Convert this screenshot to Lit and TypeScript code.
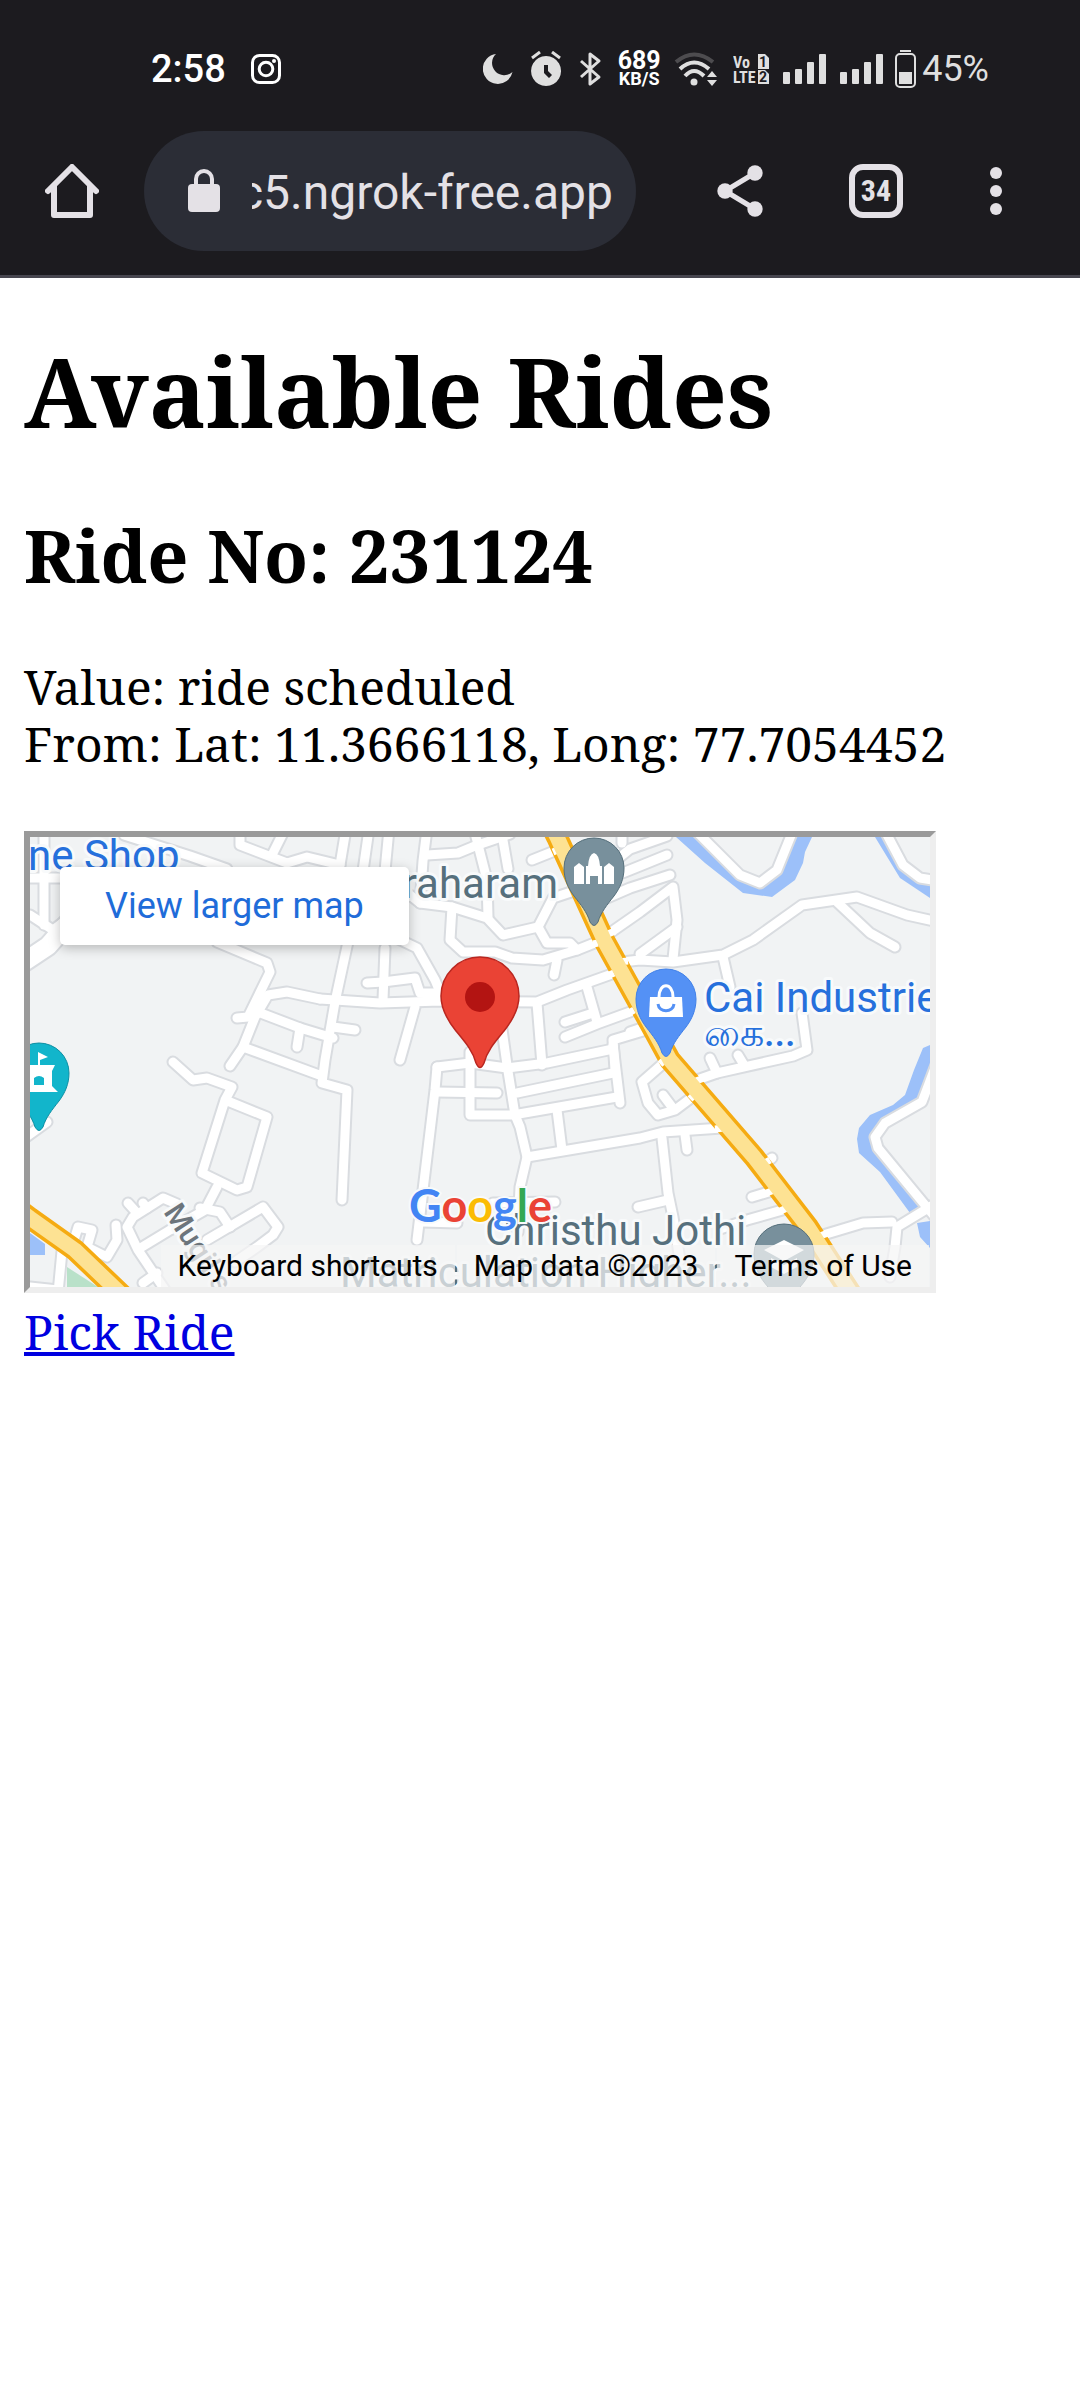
import { LitElement, html, svg, css } from "lit";
import { customElement } from "lit/decorators.js";

/* Minor streets of the map, as point lists in a 900 x 450 frame. */
const STREETS: string[] = [
  "14,-8 14,88", "0,41 40,41", "0,78 23,93 40,80", "94,-2 160,19 197,32", "210,-8 210,8 257,26 277,20 310,28",
  "254,-6 242,18", "187,105 237,126 240,135 218,180 207,181",
  "290,162 257,155 238,158 225,180 213,210 200,229", "228,175 270,191 303,201", "270,191 267,210",
  "213,210 292,239", "143,225 163,243 177,241 202,250 195,263 172,336 207,353 217,350 237,280 195,263",
  "316,-8 309,34", "339,-8 333,34", "359,-8 355,34", "397,-8 393,24 390,66", "397,18 428,16 445,9 480,-3",
  "444,-8 457,43 458,80", "471,-8 478,32", "380,58 390,66 422,70 457,81 473,98 508,90 523,61 550,52",
  "422,70 420,103 433,115 465,115 482,121 513,123 547,113 572,103", "508,90 517,106 540,106 547,113",
  "527,123 524,138", "502,23 532,11", "360,98 387,111 405,143 410,155",
  "319,100 305,165 295,223 292,246 317,253 312,363", "355,111 353,163", "337,146 353,145 385,141 390,156 412,156",
  "290,162 350,166 410,164 507,165 537,153 582,137", "385,170 370,223", "303,190 325,193",
  "507,166 512,228", "557,150 567,185", "535,185 563,176", "535,200 567,187 600,175",
  "613,194 583,203 585,233", "407,230 440,226 477,231 517,226 583,212", "440,215 440,278 483,278 587,260",
  "471,185 477,228 485,278 490,290 497,320 490,350 488,395", "407,255 467,256", "407,230 405,253 387,403",
  "487,256 583,236", "583,208 590,266", "527,273 532,313", "497,320 610,301 633,295 692,291",
  "393,385 427,386", "463,366 525,365", "592,-6 592,6", "565,40 600,12 637,-1", "567,46 600,33 637,18",
  "570,64 600,51 640,38", "577,98 610,75 643,50 647,83 643,122", "647,90 610,117",
  "592,125 610,123 643,125 693,118 723,103 772,68 827,60 877,78 908,85", "807,65 840,96 865,110",
  "693,120 700,150", "772,176 777,213 763,219 687,236 667,243", "680,221 687,236", "708,218 714,228",
  "668,-4 710,38 730,46 747,33 762,-4", "855,-6 873,28 890,41 908,44",
  "906,228 892,265 855,286 845,300 848,311 905,380", "908,365 867,390 865,410 860,440",
  "793,398 833,386 862,385", "735,326 742,321", "722,360 742,354", "690,392 717,383 756,372",
  "636,224 612,245 618,266 628,278 645,273 665,258", "633,258 642,270", "632,301 638,356 643,380 650,423",
  "608,370 638,363", "655,298 657,313", "600,195 615,190", "32,414 28,456", "0,450 28,453",
  "45,400 48,390 62,393 57,410 77,420 87,403 86,388", "137,456 108,413 97,390 103,380 133,361 147,367",
  "98,366 107,376", "113,366 117,371", "112,410 140,393 175,373 187,350", "170,371 190,375 200,390",
  "177,403 233,370 248,390 243,398 227,410 205,425", "113,446 127,436", "-4,300 17,285",
];

const HIGHWAYS = [
  "522,-10 527,0 575,105 622,190 640,223 724,320 778,390 822,458",
  "-12,372 0,381 45,413 92,458",
];

/* Streets that cut through the edge of a highway. */
const CROSSINGS = [
  "530,12 523,15", "568,106 563,107", "578,97 585,94", "588,125 598,124", "577,139 584,136",
  "597,177 604,173", "614,190 620,187", "630,227 638,220", "660,262 664,258", "666,244 674,241",
  "685,292 694,291", "733,327 740,323", "734,357 744,353", "748,375 757,371", "790,399 798,396",
];

const PIN =
  "M0 30a30 30 0 0 1 60 0c0 11-4 20-10 28C43 67 37 74 34 84q-4 7-8 0C23 74 17 67 10 58 4 50 0 41 0 30z";

@customElement("status-bar")
export class StatusBar extends LitElement {
  static styles = css`
    :host {
      display: flex;
      align-items: center;
      justify-content: space-between;
      height: 76px;
      padding: 31px 91px 24px 151px;
      color: #dfdfdf;
      font-family: Roboto, "Liberation Sans", sans-serif;
    }
    .group { display: flex; align-items: center; gap: 12px; }
    .left { gap: 25px; color: #fff; }
    .power { gap: 6px; }
    .time { font-size: 38px; line-height: 40px; font-weight: 500; }
    .level { font-size: 36px; line-height: 40px; }
    .speed {
      display: flex; flex-direction: column; align-items: center;
      width: 44px; color: #fff; font-weight: 700;
    }
    .rate { font-size: 25px; line-height: 20px; }
    .unit { font-size: 18px; line-height: 16px; }
    .narrow { font: 700 16px "Roboto Condensed", Roboto, sans-serif; }
    .chip { font: 700 14px Roboto, sans-serif; fill: #1c1b1f; }
    svg { display: block; fill: currentColor; }
  `;

  private signal(width: number) {
    return html`<svg width=${width} height="36" aria-hidden="true">
      <rect x="0" y="21" width="7" height="12" rx="1" /><rect x="12" y="18" width="7" height="15" rx="1" />
      <rect x="24" y="11" width="7" height="22" rx="1" /><rect x="36" y="3" width="7" height="30" rx="1" />
    </svg>`;
  }

  render() {
    return html`
      <div class="group left">
        <span class="time">2:58</span>
        <svg width="30" height="30" viewBox="0 0 30 30" aria-hidden="true">
          <rect x="1.500" y="1.500" width="27" height="27" rx="7" fill="none" stroke="currentColor" stroke-width="3" />
          <circle cx="15" cy="15" r="6.800" fill="none" stroke="currentColor" stroke-width="3" />
          <circle cx="23" cy="7" r="2" />
        </svg>
      </div>
      <div class="group">
        <svg width="36" height="36" aria-hidden="true">
          <path d="M13 3A15 15 0 1 0 29.500 21 12 12 0 0 1 13 3z" />
        </svg>
        <svg width="37" height="36" aria-hidden="true">
          <path fill-rule="evenodd" d="M15 5a15 15 0 1 0 .1 0zM13 14h4v6l4 4-3 3-5-5z" />
          <path d="M1 7l8-6M29 7l-8-6" stroke="currentColor" stroke-width="3" />
        </svg>
        <svg width="25" height="36" aria-hidden="true">
          <path d="M1 10l18 16-9 7V3l9 7L1 26" fill="none" stroke="currentColor" stroke-width="3" stroke-linejoin="round" />
        </svg>
        <div class="speed"><span class="rate">689</span><span class="unit">KB/S</span></div>
        <svg width="48" height="36" aria-hidden="true">
          <g fill="none" stroke="currentColor" stroke-width="4">
            <path d="M3 11q18-15 37 0" opacity=".25" />
            <path d="M7 18q14-13 29 0" /><path d="M12 25q9-10 19 0" />
          </g>
          <circle cx="21" cy="31" r="3.500" />
          <path d="M34 26l5-6 5 6zM34 29h10l-5 6z" />
        </svg>
        <svg width="38" height="36" aria-hidden="true">
          <text class="narrow" x="0" y="17">Vo</text>
          <text class="narrow" x="0" y="32">LTE</text>
          <path d="M25 3h7l4 4v11H25z" /><path d="M25 19h7l4 4v10H25z" />
          <text class="chip" x="26" y="16">1</text><text class="chip" x="26" y="31">2</text>
        </svg>
        ${this.signal(45)} ${this.signal(43)}
        <div class="group power">
          <svg width="21" height="40" aria-hidden="true">
            <rect x="5" y="1" width="11" height="2" />
            <rect x="1" y="5" width="19" height="33" rx="4" fill="none" stroke="currentColor" stroke-width="2" />
            <rect x="4" y="23" width="13" height="12" />
          </svg>
          <span class="level">45%</span>
        </div>
      </div>
    `;
  }
}

@customElement("browser-toolbar")
export class BrowserToolbar extends LitElement {
  static styles = css`
    :host {
      display: flex;
      align-items: center;
      padding: 0 32px 24px 0;
      border-bottom: 3px solid #47464f;
      color: #e4e1e6;
      font-family: Roboto, "Liberation Sans", sans-serif;
    }
    button {
      display: flex; align-items: center; justify-content: center;
      width: 136px; height: 120px; padding: 0; border: 0;
      background: none; color: inherit; font: inherit;
    }
    .home { width: 144px; }
    .share { margin-left: 36px; }
    .menu { width: 104px; }
    .address {
      display: flex; align-items: center; gap: 32px; flex: 1; min-width: 0;
      height: 120px; box-sizing: border-box; padding: 0 23px 0 44px;
      border-radius: 60px; background: #2b2d36;
    }
    .url {
      flex: 1; min-width: 0; height: 62px; padding: 2px 0 0; box-sizing: border-box;
      border: 0; outline: 0; background: none; color: inherit;
      font: 48px/60px Roboto, "Liberation Sans", sans-serif;
      direction: rtl;
    }
    .tabs span {
      display: flex; align-items: center; justify-content: center;
      width: 54px; height: 54px; box-sizing: border-box;
      border: 6px solid currentColor; border-radius: 14px;
      font-size: 30px; line-height: 32px; font-weight: 700;
      font-family: "Roboto Condensed", Roboto, "Liberation Sans", sans-serif;
    }
    svg { display: block; flex: none; }
  `;

  render() {
    return html`
      <button class="home" aria-label="Home">
        <svg width="54" height="54" viewBox="0 0 54 54" fill="none" stroke="currentColor" stroke-width="6" stroke-linejoin="round" stroke-linecap="round">
          <path d="M3 27L27 3l24 24M9 22v29h36V22" />
        </svg>
      </button>
      <div class="address">
        <svg width="32" height="44" viewBox="0 0 32 44" aria-hidden="true">
          <rect y="15" width="32" height="28" rx="4" fill="currentColor" />
          <path d="M8 17v-7a8 8 0 0 1 16 0v7" fill="none" stroke="currentColor" stroke-width="4" />
        </svg>
        <input class="url" type="text" aria-label="Address" value="c5.ngrok-free.app" />
      </div>
      <button class="share" aria-label="Share">
        <svg width="46" height="52" viewBox="0 0 46 52" fill="currentColor">
          <path d="M38 8L8 26 38 44" fill="none" stroke="currentColor" stroke-width="5" />
          <circle cx="38" cy="8" r="7.700" /><circle cx="8" cy="26" r="7.700" /><circle cx="38" cy="44" r="7.700" />
        </svg>
      </button>
      <button class="tabs" aria-label="34 open tabs"><span>34</span></button>
      <button class="menu" aria-label="Menu">
        <svg width="12" height="48" viewBox="0 0 12 48" fill="currentColor">
          <circle cx="6" cy="6" r="6" /><circle cx="6" cy="24" r="6" /><circle cx="6" cy="42" r="6" />
        </svg>
      </button>
    `;
  }
}

@customElement("ride-map")
export class RideMap extends LitElement {
  static styles = css`
    :host {
      display: block;
      position: relative;
      box-sizing: border-box;
      width: 912px;
      max-width: 100%;
      overflow: hidden;
      border: 6px solid;
      border-color: #9a9a9a #eee #eee #9a9a9a;
      background: #f1f3f4;
      font-family: Roboto, "Liberation Sans", sans-serif;
    }
    .canvas { display: block; width: 100%; height: auto; }
    .line { fill: none; stroke-linejoin: round; stroke-linecap: round; }
    .casing { stroke: #d9dce0; stroke-width: 13px; }
    .street { stroke: #fff; stroke-width: 9px; }
    .edge { stroke: #f5ab12; stroke-width: 22px; }
    .highway { stroke: #fde293; stroke-width: 15px; }
    .crossing { stroke: #fff; stroke-width: 7px; stroke-linecap: butt; }
    .water { fill: #9cc0f9; }
    .label {
      font-size: 42px; stroke: #f8fafb; stroke-width: 6px;
      stroke-linejoin: round; paint-order: stroke;
    }
    .blue { fill: #2670dc; }
    .slate { fill: #56707d; }
    .grey { fill: #6d757c; }
    .sub { font-size: 38px; font-weight: 500; }
    .road { font-size: 30px; font-weight: 500; }
    .brand { font: 700 45px Lato, Roboto, sans-serif; stroke: #f8fafb; stroke-width: 4px; paint-order: stroke; }
    .larger {
      position: absolute; top: 30px; left: 30px;
      padding: 18px 45px; border-radius: 5px; background: #fff; color: #1f6cd9;
      font-size: 36px; line-height: 42px; text-decoration: none; white-space: nowrap;
      box-shadow: 0 3px 12px rgba(0, 0, 0, 0.25);
    }
    .credits {
      position: absolute; right: 0; bottom: 0;
      display: flex; gap: 2px; padding-right: 1px; font-size: 30px; line-height: 42px; white-space: nowrap;
    }
    .credits > * {
      padding: 0 17px; border: 0; background: rgba(245, 245, 245, 0.72);
      color: #000; font: inherit; text-decoration: none;
    }
  `;

  render() {
    const lines = (list: string[], kind: string) =>
      list.map((points) => svg`<polyline class="line ${kind}" points=${points} />`);
    return html`
      <svg class="canvas" viewBox="0 0 900 450" role="img" aria-label="Map of the pick-up point">
        <path class="water" d="M646 0L675 26 713 56 742 60 765 43 773 26 775 15 782 0H760L745 33 730 46 710 38 668 0zM845 0L870 41 900 61V40L873 28 857 0z" />
        <path class="water" d="M900 208L893 211 884 233 875 258 863 268 840 278 829 291 827 302 829 316 850 335 880 376 895 372 848 311 845 300 855 286 892 265 900 245zM887 386L890 400 900 411V384z" />
        <path class="water" d="M0 396L15 407V418H0z" />
        <path d="M37 430L68 450H37z" fill="#b9e1c9" />
        ${lines(STREETS, "casing")}
        <polyline class="line" points="-6,125 18,109 40,84" stroke="#d9dce0" stroke-width="22" />
        ${lines(STREETS, "street")}
        <polyline class="line" points="-6,125 18,109 40,84" stroke="#fff" stroke-width="18" />
        ${lines(HIGHWAYS, "edge")} ${lines(CROSSINGS, "crossing")} ${lines(HIGHWAYS, "highway")}

        <text class="label blue" x="-2" y="33">ne Shop</text>
        <text class="label slate" x="528" y="61" text-anchor="end">raharam</text>
        <text class="label blue" x="674" y="175">Cai Industries</text>
        <text class="label sub blue" x="674" y="209">கை...</text>
        <text class="label slate" x="455" y="408">Christhu Jothi</text>
        <text class="label slate" x="310" y="450">Matriculation Higher...</text>
        <text class="label road grey" transform="translate(133 375) rotate(57)">Mugil s</text>

        <g transform="translate(534 1)">
          <path d=${PIN} fill="#78909c" stroke="#546e7a" />
          <path fill="#fff" d="M10 46V29l5-4 5 4v17zM40 46V29l5-4 5 4v17zM22 46V28h2q1-12 6-13 5 1 6 13h2v18h-4v-8h-8v8z" />
        </g>
        <g transform="translate(606 132)">
          <path d=${PIN} fill="#5491f5" stroke="#4080e8" />
          <path d="M14 28h32l1 20H13z" fill="#fff" />
          <path d="M23 28c0-15 14-15 14 0" fill="none" stroke="#fff" stroke-width="3" />
          <path d="M22 35c1 9 15 9 16 0" fill="none" stroke="#5491f5" stroke-width="3" />
        </g>
        <g transform="translate(-21 206)">
          <path d=${PIN} fill="#12b5cb" stroke="#0e8fa3" />
          <path fill="#fff" d="M29 9l10 5-8 3v5h15l-3 6v15l6 6H10l6-6V28l-3-6h16zM25 42h10v-7q-5-4-10 0z" fill-rule="evenodd" />
        </g>
        <g transform="translate(724 387)">
          <path d=${PIN} fill="#78909c" stroke="#546e7a" />
          <path fill="#fff" d="M30 16l20 10-20 11-20-11zM17 34l13 7 13-7v9l-13 7-13-7z" />
        </g>
        <path d="M411 159a39 39 0 0 1 78 0c0 14-7 25-15 35-9 11-17 20-20 32q-4 9-8 0c-3-12-11-21-20-32-8-10-15-21-15-35z" fill="#ea4335" stroke="#b92720" stroke-width="1.500" />
        <circle cx="450" cy="160" r="15" fill="#b31412" />

        <text class="brand" x="379" y="385"><tspan fill="#4285f4">G</tspan><tspan fill="#ea4335">o</tspan><tspan fill="#fbbc04">o</tspan><tspan fill="#4285f4">g</tspan><tspan fill="#34a853">l</tspan><tspan fill="#ea4335">e</tspan></text>
      </svg>
      <a class="larger" href="#map">View larger map</a>
      <div class="credits">
        <button>Keyboard shortcuts</button>
        <span>Map data ©2023</span>
        <a href="#terms">Terms of Use</a>
      </div>
    `;
  }
}

@customElement("app-root")
export class AppRoot extends LitElement {
  static styles = css`
    :host { display: block; min-height: 100vh; background: #fff; color: #000; }
    .chrome { background: #1c1b1f; }
    .page {
      display: flex; flex-direction: column; align-items: flex-start;
      padding: 48px 24px; font: 48px/57px "Noto Serif", "DejaVu Serif", serif;
    }
    h1 { margin: 0; font-size: 96px; line-height: 130px; }
    h2 { margin: 50px 0 54px; font-size: 72px; line-height: 98px; }
    p { margin: 0; }
    ride-map { margin: 59px 0 10px; }
    a { color: #0000e0; text-decoration-thickness: 4px; }
  `;

  render() {
    return html`
      <header class="chrome">
        <status-bar></status-bar>
        <browser-toolbar></browser-toolbar>
      </header>
      <main class="page">
        <h1>Available Rides</h1>
        <h2>Ride No: 231124</h2>
        <p>Value: ride scheduled</p>
        <p>From: Lat: 11.3666118, Long: 77.7054452</p>
        <ride-map></ride-map>
        <a href="#pick">Pick Ride</a>
      </main>
    `;
  }
}
